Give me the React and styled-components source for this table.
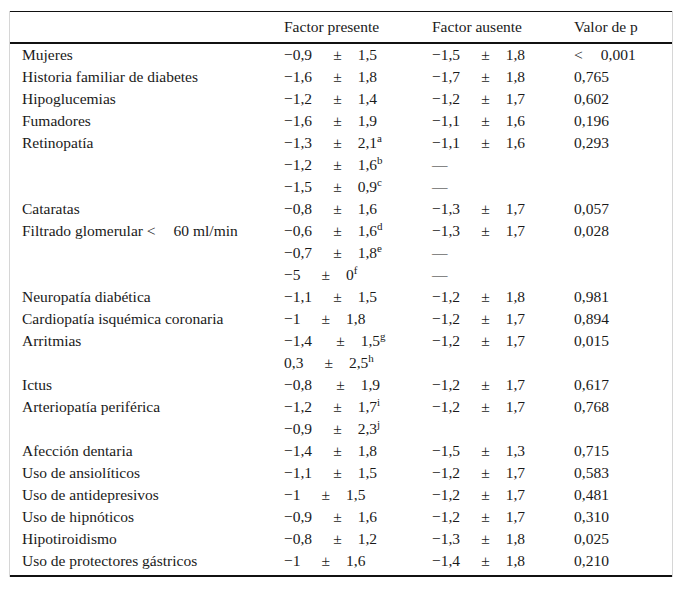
import React from "react";
import styled, { createGlobalStyle } from "styled-components";

const Global = createGlobalStyle`
  html, body { margin: 0; padding: 0; background: #fff; }
  body { font-family: "Liberation Serif", "Times New Roman", "DejaVu Serif", serif; color: #1a1a1a; }
`;

const Page = styled.div`
  padding: 11px 10px 0 9px;
`;

const Frame = styled.div`
  width: 662px;
  border-left: 1px solid #d6d6d6;
  border-right: 1px solid #d6d6d6;
`;

const Table = styled.table`
  width: 100%;
  border-collapse: collapse;
  table-layout: fixed;
  font-family: "Liberation Serif", "Times New Roman", "DejaVu Serif", serif;
  font-size: 15.5px;
  line-height: 22px;
  color: #1a1a1a;
  border-top: 1px solid #111;
  border-bottom: 2px solid #111;
`;

const HeadRow = styled.tr`
  border-bottom: 2px solid #111;
`;

const HeadCell = styled.th`
  font-weight: normal;
  text-align: left;
  padding: 4px 0 4px 12px;
  height: 22px;
  white-space: nowrap;
`;

const Row = styled.tr``;

const Cell = styled.td`
  padding: 0 0 0 12px;
  height: 22px;
  white-space: nowrap;
  vertical-align: middle;
`;

const Spacer = styled.tr`
  height: 4px;
`;

const Pm = styled.span`
  margin: 0 ${(p) => p.$r}px 0 ${(p) => p.$l}px;
`;

const Sup = styled.sup`
  font-size: 11px;
  line-height: 0;
  vertical-align: 6px;
`;

const Gap = styled.span`
  display: inline-block;
  width: ${(p) => p.$w}px;
`;

const Value = ({ v }) => {
  if (!v) return null;
  if (v === "—") return <span>—</span>;
  const [a, b, sup, l = 21, r = 16] = v;
  return (
    <span>
      {a}
      <Pm $l={l} $r={r}>±</Pm>
      {b}
      {sup && <Sup>{sup}</Sup>}
    </span>
  );
};

const rows = [
  { label: "Mujeres", pre: ["−0,9", "1,5"], aus: ["−1,5", "1,8"], p: <>{"<"}<Gap $w={18} />0,001</> },
  { label: "Historia familiar de diabetes", pre: ["−1,6", "1,8"], aus: ["−1,7", "1,8"], p: "0,765" },
  { label: "Hipoglucemias", pre: ["−1,2", "1,4"], aus: ["−1,2", "1,7"], p: "0,602" },
  { label: "Fumadores", pre: ["−1,6", "1,9"], aus: ["−1,1", "1,6"], p: "0,196" },
  { label: "Retinopatía", pre: ["−1,3", "2,1", "a"], aus: ["−1,1", "1,6"], p: "0,293" },
  { label: "", pre: ["−1,2", "1,6", "b"], aus: "—", p: "" },
  { label: "", pre: ["−1,5", "0,9", "c"], aus: "—", p: "" },
  { label: "Cataratas", pre: ["−0,8", "1,6"], aus: ["−1,3", "1,7"], p: "0,057" },
  { label: <>Filtrado glomerular {"<"}<Gap $w={18} />60 ml/min</>, pre: ["−0,6", "1,6", "d"], aus: ["−1,3", "1,7"], p: "0,028" },
  { label: "", pre: ["−0,7", "1,8", "e"], aus: "—", p: "" },
  { label: "", pre: ["−5", "0", "f"], aus: "—", p: "" },
  { label: "Neuropatía diabética", pre: ["−1,1", "1,5"], aus: ["−1,2", "1,8"], p: "0,981" },
  { label: "Cardiopatía isquémica coronaria", pre: ["−1", "1,8"], aus: ["−1,2", "1,7"], p: "0,894" },
  { label: "Arritmias", pre: ["−1,4", "1,5", "g", 24, 16], aus: ["−1,2", "1,7"], p: "0,015" },
  { label: "", pre: ["0,3", "2,5", "h"], aus: null, p: "" },
  { label: "Ictus", pre: ["−0,8", "1,9", null, 24, 16], aus: ["−1,2", "1,7"], p: "0,617" },
  { label: "Arteriopatía periférica", pre: ["−1,2", "1,7", "i"], aus: ["−1,2", "1,7"], p: "0,768" },
  { label: "", pre: ["−0,9", "2,3", "j"], aus: null, p: "" },
  { label: "Afección dentaria", pre: ["−1,4", "1,8"], aus: ["−1,5", "1,3"], p: "0,715" },
  { label: "Uso de ansiolíticos", pre: ["−1,1", "1,5"], aus: ["−1,2", "1,7"], p: "0,583" },
  { label: "Uso de antidepresivos", pre: ["−1", "1,5"], aus: ["−1,2", "1,7"], p: "0,481" },
  { label: "Uso de hipnóticos", pre: ["−0,9", "1,6"], aus: ["−1,2", "1,7"], p: "0,310" },
  { label: "Hipotiroidismo", pre: ["−0,8", "1,2"], aus: ["−1,3", "1,8"], p: "0,025" },
  { label: "Uso de protectores gástricos", pre: ["−1", "1,6"], aus: ["−1,4", "1,8"], p: "0,210" },
];

export default function App() {
  return (
    <Page>
      <Global />
      <Frame>
        <Table>
          <colgroup>
            <col style={{ width: "262px" }} />
            <col style={{ width: "148px" }} />
            <col style={{ width: "142px" }} />
            <col />
          </colgroup>
          <thead>
            <HeadRow>
              <HeadCell />
              <HeadCell>Factor presente</HeadCell>
              <HeadCell>Factor ausente</HeadCell>
              <HeadCell>Valor de p</HeadCell>
            </HeadRow>
          </thead>
          <tbody>
            {rows.map((r, i) => (
              <Row key={i}>
                <Cell>{r.label}</Cell>
                <Cell><Value v={r.pre} /></Cell>
                <Cell><Value v={r.aus} /></Cell>
                <Cell>{r.p}</Cell>
              </Row>
            ))}
            <Spacer><td colSpan={4} /></Spacer>
          </tbody>
        </Table>
      </Frame>
    </Page>
  );
}
